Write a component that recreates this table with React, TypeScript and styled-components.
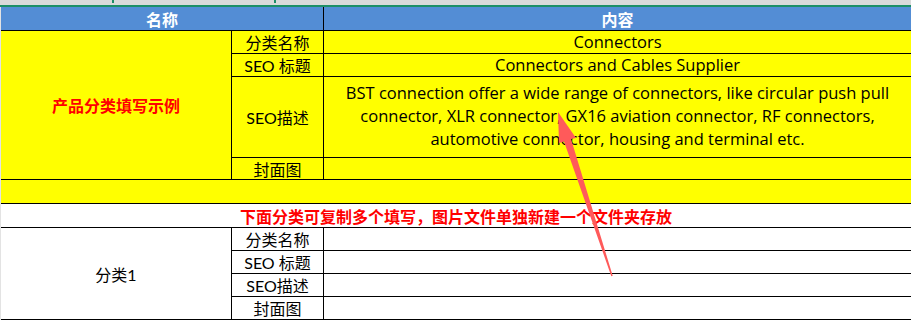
import styled, { createGlobalStyle } from 'styled-components';

const GlobalStyle = createGlobalStyle`
  html, body {
    margin: 0;
    padding: 0;
    background: #ffffff;
    overflow: hidden;
  }
  body {
    font-family: Lato, "Noto Sans CJK SC", sans-serif;
  }
`;

type Row = { label: string; content?: string };

const exampleRows: Row[] = [
  { label: '分类名称', content: 'Connectors' },
  { label: 'SEO 标题', content: 'Connectors and Cables Supplier' },
  { label: 'SEO描述' },
  { label: '封面图', content: '' },
];

const categoryRows: Row[] = [
  { label: '分类名称' },
  { label: 'SEO 标题' },
  { label: 'SEO描述' },
  { label: '封面图' },
];

const description = [
  'BST connection offer a wide range of connectors, like circular push pull',
  'connector, XLR connector, GX16 aviation connector, RF connectors,',
  'automotive connector, housing and terminal etc.',
];

export default function App() {
  return (
    <>
      <GlobalStyle />
      <Page>
        <ColumnBar>
          <ColumnMark style={{ marginLeft: 112 }} />
          <ColumnMark style={{ marginLeft: 160 }} />
        </ColumnBar>
        <SelectLine />
        <SheetRow>
          <RowGutter />
          <Sheet>
            <HeadCell $span={2} $right>
              名称
            </HeadCell>
            <HeadCell>内容</HeadCell>

            <GroupCell $rows={4} $bg="#ffff00" $red>
              产品分类填写示例
            </GroupCell>
            {exampleRows.map((row, i) => (
              <>
                <LabelCell key={'l' + i} $bg="#ffff00">
                  {row.label}
                </LabelCell>
                <ContentCell key={'c' + i} $bg="#ffff00">
                  {row.content === undefined ? (
                    <Description>
                      {description.map((line) => (
                        <span key={line}>{line}</span>
                      ))}
                    </Description>
                  ) : (
                    row.content
                  )}
                </ContentCell>
              </>
            ))}

            <WideCell $bg="#ffff00" />
            <WideCell $bg="#ffffff">
              <Note>下面分类可复制多个填写，图片文件单独新建一个文件夹存放</Note>
            </WideCell>

            <GroupCell $rows={4} $bg="#ffffff">
              分类1
            </GroupCell>
            {categoryRows.map((row, i) => (
              <>
                <LabelCell key={'cl' + i} $bg="#ffffff">
                  {row.label}
                </LabelCell>
                <ContentCell key={'cc' + i} $bg="#ffffff" />
              </>
            ))}
          </Sheet>
        </SheetRow>

        {/* annotation arrow drawn over the sheet */}
        <ArrowLayer width="911" height="320" viewBox="0 0 911 320">
          <polygon
            points="558,112 576,138 571,139 612.7,275.8 611.3,276.2 564,141.5 559,143"
            fill="#ff5a5a"
          />
        </ArrowLayer>
      </Page>
    </>
  );
}

const Page = styled.div`
  position: relative;
  width: 911px;
  height: 320px;
  overflow: hidden;
  display: flex;
  flex-direction: column;
`;

const ColumnBar = styled.div`
  height: 5px;
  background: #dadada;
  display: flex;
`;

const ColumnMark = styled.div`
  width: 2px;
  height: 3px;
  background: #1d8f67;
`;

const SelectLine = styled.div`
  height: 2px;
  background: #1d8f67;
`;

const SheetRow = styled.div`
  display: flex;
  flex: 1;
`;

const RowGutter = styled.div`
  width: 2px;
  background: #e3e3e3;
`;

const Sheet = styled.div`
  display: grid;
  grid-template-columns: 231px 92px 587px;
  grid-template-rows: 24px 23px 23px 81px 22px 24px 24px 23px 23px 23px 23px;
  font-size: 16px;
  color: #000;
`;

const Cell = styled.div<{ $bg?: string; $right?: boolean }>`
  box-sizing: border-box;
  display: flex;
  align-items: center;
  justify-content: center;
  text-align: center;
  white-space: nowrap;
  background: ${({ $bg }) => $bg || '#ffffff'};
  border-bottom: 1px solid #000;
  border-right: ${({ $right }) => ($right ? '1px solid #000' : 'none')};
`;

const HeadCell = styled(Cell)<{ $span?: number }>`
  grid-column: span ${({ $span }) => $span || 1};
  background: #538dd5;
  color: #ffffff;
  font-weight: bold;
`;

const GroupCell = styled(Cell).attrs({ $right: true })<{
  $rows: number;
  $red?: boolean;
}>`
  grid-row: span ${({ $rows }) => $rows};
  color: ${({ $red }) => ($red ? '#ff0000' : '#000')};
  font-weight: ${({ $red }) => ($red ? 'bold' : 'normal')};
`;

const LabelCell = styled(Cell).attrs({ $right: true })``;

const ContentCell = styled(Cell)`
  font-family: "Open Sans", "Noto Sans CJK SC", sans-serif;
  font-size: 16.5px;
  padding-bottom: 2px;
`;

const WideCell = styled(Cell)`
  grid-column: span 3;
`;

const Description = styled.div`
  display: flex;
  flex-direction: column;
  align-items: center;
  line-height: 23px;
  padding-bottom: 2px;
`;

const Note = styled.div`
  color: #ff0000;
  font-weight: bold;
`;

const ArrowLayer = styled.svg`
  position: absolute;
  left: 0;
  top: 0;
  pointer-events: none;
`;
